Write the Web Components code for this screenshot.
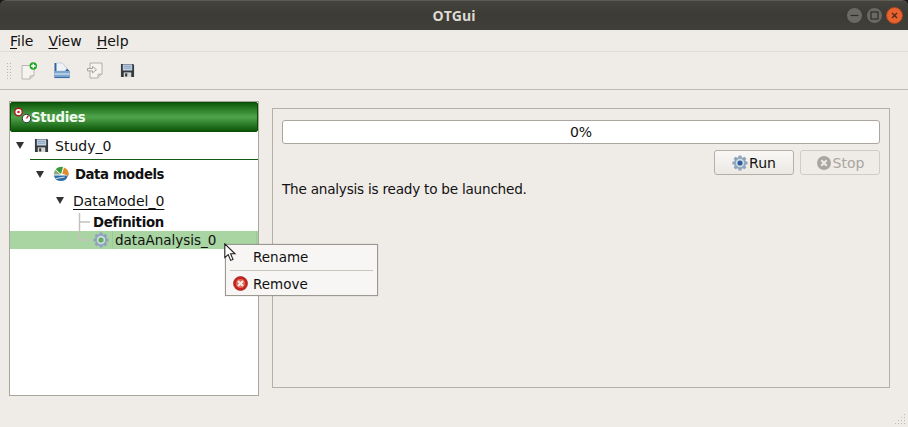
<!DOCTYPE html>
<html>
<head>
<meta charset="utf-8">
<title>OTGui</title>
<style>
	html, body {
		margin: 0;
		padding: 0;
		background: #efebe7;
	}
	body {
		font: 14px "DejaVu Sans", sans-serif;
		color: #111;
	}
</style>
</head>
<body>

<ot-window>
	<ot-titlebar slot="title">OTGui</ot-titlebar>
	<ot-menubar slot="menu"></ot-menubar>
	<ot-toolbar slot="tools"></ot-toolbar>
	<ot-study-tree slot="left"></ot-study-tree>
	<ot-analysis-panel slot="right"></ot-analysis-panel>
	<ot-context-menu slot="overlay"></ot-context-menu>
</ot-window>

<script>
// Shared icon markup, reused by several components
const ICONS = {
	floppy: ( s ) => `<svg width="${ s }" height="${ s }" viewBox="0 0 16 16">
		<path d="M1 1h13l1 1v13H1z" fill="#343a40"/>
		<rect x="3" y="1.5" width="10" height="6.5" fill="#c4d2e2"/>
		<path d="M4 3.5h8M4 5.5h8" stroke="#7f9dbd" stroke-width="1"/>
		<rect x="4" y="10" width="8" height="5" fill="#d6d6d2"/>
		<rect x="5.5" y="11" width="2.2" height="3.4" fill="#33373c"/>
	</svg>`,
	gear: ( s, core ) => `<svg width="${ s }" height="${ s }" viewBox="0 0 16 16">
		<g fill="#8ea4bb">
			<circle cx="8" cy="8" r="6"/>
			<rect x="6.4" y="0.4" width="3.2" height="15.2" rx=".6"/>
			<rect x="6.4" y="0.4" width="3.2" height="15.2" rx=".6" transform="rotate(45 8 8)"/>
			<rect x="6.4" y="0.4" width="3.2" height="15.2" rx=".6" transform="rotate(90 8 8)"/>
			<rect x="6.4" y="0.4" width="3.2" height="15.2" rx=".6" transform="rotate(135 8 8)"/>
		</g>
		<circle cx="8" cy="8" r="4.2" fill="#d3dde6"/>
		<circle cx="8" cy="8" r="2.6" fill="${ core }"/>
	</svg>`,
};

class OtWindow extends HTMLElement {
	constructor() {
		super();
		this.attachShadow( { mode: 'open' } ).innerHTML = `
<style>
	:host {
		display: flex;
		flex-direction: column;
		position: relative;
		width: 908px;
		height: 427px;
		overflow: hidden;
		background: #efebe7;
	}
	#main {
		display: flex;
		align-items: flex-start;
		gap: 13px;
		padding: 11px 18px 0 9px;
	}
	#grip {
		position: absolute;
		right: 2px;
		bottom: 2px;
		width: 11px;
		height: 11px;
	}
</style>
<slot name="title"></slot>
<slot name="menu"></slot>
<slot name="tools"></slot>
<div id="main">
	<slot name="left"></slot>
	<slot name="right"></slot>
</div>
<slot name="overlay"></slot>
<svg id="grip" viewBox="0 0 11 11" fill="#bdb9b2">
	<rect x="9" y="0" width="1" height="1"/>
	<rect x="6" y="3" width="1" height="1"/><rect x="9" y="3" width="1" height="1"/>
	<rect x="3" y="6" width="1" height="1"/><rect x="6" y="6" width="1" height="1"/><rect x="9" y="6" width="1" height="1"/>
	<rect x="0" y="9" width="1" height="1"/><rect x="3" y="9" width="1" height="1"/><rect x="6" y="9" width="1" height="1"/><rect x="9" y="9" width="1" height="1"/>
</svg>`;
	}
}
customElements.define( 'ot-window', OtWindow );

class OtTitlebar extends HTMLElement {
	constructor() {
		super();
		this.attachShadow( { mode: 'open' } ).innerHTML = `
<style>
	:host {
		display: block;
		height: 30px;
		background: #1c1b19;
	}
	#bar {
		position: relative;
		display: flex;
		align-items: center;
		justify-content: center;
		height: 30px;
		box-sizing: border-box;
		border-radius: 6px 6px 0 0;
		border-top: 1px solid #5d5b54;
		background: linear-gradient(#45433e, #3d3b36 45%, #413f3a);
		color: #dfdbd2;
		font: bold 14px "Open Sans", sans-serif;
	}
	#btns {
		position: absolute;
		right: 5px;
		top: 6px;
		display: flex;
		gap: 3px;
	}
	.b {
		width: 17px;
		height: 17px;
		display: block;
	}
</style>
<div id="bar">
	<slot></slot>
	<div id="btns">
		<svg class="b" viewBox="0 0 17 17"><circle cx="8.5" cy="8.5" r="8" fill="#6a6964" stroke="#3a3934"/><path d="M4.5 8.5h8" stroke="#2f2e2a" stroke-width="1.2"/></svg>
		<svg class="b" viewBox="0 0 17 17"><circle cx="8.5" cy="8.5" r="8" fill="#6a6964" stroke="#3a3934"/><rect x="5" y="5" width="7" height="7" fill="none" stroke="#2f2e2a" stroke-width="1.2"/></svg>
		<svg class="b" viewBox="0 0 17 17"><circle cx="8.5" cy="8.5" r="8" fill="#e9622f" stroke="#a8451f"/><path d="M6 6l5 5M11 6l-5 5" stroke="#4a2a18" stroke-width="1.2"/></svg>
	</div>
</div>`;
	}
}
customElements.define( 'ot-titlebar', OtTitlebar );

class OtMenubar extends HTMLElement {
	constructor() {
		super();
		this.attachShadow( { mode: 'open' } ).innerHTML = `
<style>
	:host {
		display: flex;
		gap: 15px;
		height: 22px;
		box-sizing: border-box;
		padding: 2px 0 0 10px;
		border-bottom: 1px solid #dfdbd6;
		font: 14px/18px "DejaVu Sans", sans-serif;
		color: #111;
	}
	u {
		text-decoration-thickness: 1px;
		text-underline-offset: 2px;
	}
</style>
<span><u>F</u>ile</span>
<span><u>V</u>iew</span>
<span><u>H</u>elp</span>`;
	}
}
customElements.define( 'ot-menubar', OtMenubar );

class OtToolbar extends HTMLElement {
	constructor() {
		super();
		this.attachShadow( { mode: 'open' } ).innerHTML = `
<style>
	:host {
		display: flex;
		align-items: center;
		height: 38px;
		box-sizing: border-box;
		padding-left: 6px;
		border-bottom: 1px solid #bdb9b3;
		background: #efebe7;
	}
	#handle {
		width: 6px;
		height: 18px;
		margin-right: 9px;
		background-image: radial-gradient(#b9b5ae 0.7px, transparent 0.8px);
		background-size: 3px 3px;
	}
	#icons {
		display: flex;
		gap: 17px;
	}
	svg {
		display: block;
	}
</style>
<div id="handle"></div>
<div id="icons">
	<svg width="16" height="18" viewBox="0 0 16 18">
		<path d="M1 3.5h12v10l-4 3.5H1z" fill="#f4f3f0" stroke="#b9b7b1"/>
		<path d="M13 13.5l-4 .5v3" fill="#dcdad5" stroke="#b9b7b1"/>
		<circle cx="12.3" cy="4" r="3.7" fill="#1ea51e"/>
		<path d="M10 4h4.6M12.3 1.8v4.4" stroke="#fff" stroke-width="1.4"/>
	</svg>
	<svg width="16" height="17" viewBox="0 0 16 17">
		<path d="M.5 1h7l8 8v6.5H.5z" fill="#2f63a0"/>
		<path d="M2.5 1h6l4.5 5.5-2 2.5H2.5z" fill="#eef2f6" stroke="#9fb4c9" stroke-width=".5"/>
		<path d="M.5 9h15v7H.5z" fill="#7ea6cf"/>
		<path d="M.5 12h15" stroke="#c9dcee" stroke-width="1.4"/>
		<path d="M.5 15.5h15" stroke="#3d6ea5" stroke-width="1.2"/>
	</svg>
	<svg width="16" height="17" viewBox="0 0 16 17">
		<path d="M3 1h12v11l-4 4H3z" fill="#f4f3f0" stroke="#b0aea8"/>
		<path d="M15 12l-4 .4V16" fill="#dcdad5" stroke="#b0aea8"/>
		<path d="M0.5 6.5h5v-2l4 3.2-4 3.2v-2h-5z" fill="#f4f3f0" stroke="#a5a39d"/>
	</svg>
	<svg width="15" height="15" viewBox="0 0 16 16" style="margin-top:1px">
		<path d="M1 1h13l1 1v13H1z" fill="#343a40"/>
		<rect x="3" y="1.5" width="10" height="6.5" fill="#c4d2e2"/>
		<path d="M4 3.5h8M4 5.5h8" stroke="#7f9dbd"/>
		<rect x="4" y="10" width="8" height="5" fill="#d6d6d2"/>
		<rect x="5.5" y="11" width="2.2" height="3.4" fill="#33373c"/>
	</svg>
</div>`;
	}
}
customElements.define( 'ot-toolbar', OtToolbar );

/* One line of the tree: indent, arrow or branch, icon and label */
class OtTreeRow extends HTMLElement {
	constructor() {
		super();
		this.attachShadow( { mode: 'open' } ).innerHTML = `
<style>
	:host {
		display: flex;
		align-items: center;
		position: relative;
		height: var(--row-h, 18px);
		padding-left: var(--indent, 0);
		color: #111;
	}
	:host([selected]) {
		background: #a8d5a2;
	}
	#arrow {
		width: 0;
		height: 0;
		margin: 0 10px 0 2px;
		border-style: solid;
		border-width: 7px 4px 0 4px;
		border-color: #333 transparent transparent transparent;
	}
	:host(:not([arrow])) #arrow {
		display: none;
	}
	#icon {
		display: flex;
		margin-left: var(--icon-shift, 0);
		margin-right: var(--icon-gap, 5px);
	}
</style>
<div id="arrow"></div>
<div id="icon"><slot name="icon"></slot></div>
<slot></slot>`;
	}
}
customElements.define( 'ot-tree-row', OtTreeRow );

class OtStudyTree extends HTMLElement {
	constructor() {
		super();
		this.attachShadow( { mode: 'open' } ).innerHTML = `
<style>
	:host {
		display: flex;
		flex-direction: column;
		flex: none;
		position: relative;
		width: 250px;
		height: 295px;
		box-sizing: border-box;
		border: 1px solid #a9a69f;
		background: #fff;
		font: 14px "DejaVu Sans", sans-serif;
	}
	#head {
		display: flex;
		align-items: center;
		height: 30px;
		box-sizing: border-box;
		padding-left: 2px;
		border-radius: 2px;
		background: linear-gradient(#0e5a0a, #4fa54b 50%, #0c5508);
		border: 1px solid #0b4d07;
		color: #f2faf0;
		font-size: 13.3px;
		letter-spacing: -.3px;
		font-weight: bold;
	}
	#head svg {
		margin-top: -4px;
	}
	#sep {
		height: 1px;
		margin-left: 20px;
		background: #155a12;
	}
	#branch {
		position: absolute;
		left: 68px;
		top: 111px;
	}
	svg {
		display: block;
	}
	#study {
		--row-h: 27px;
		--indent: 4px;
		--icon-gap: 6px;
	}
	#models {
		--row-h: 28px;
		--indent: 24px;
		--icon-gap: 6px;
		--icon-shift: -1px;
		font-size: 13.3px;
		letter-spacing: -.45px;
		font-weight: bold;
	}
	#model {
		--row-h: 25px;
		--indent: 44px;
		--icon-gap: 0;
		--icon-shift: -1px;
	}
	#model u {
		text-decoration-thickness: 1px;
		text-underline-offset: 3px;
	}
	#def {
		--row-h: 18px;
		--indent: 83px;
		--icon-gap: 0;
		font-size: 13.3px;
		letter-spacing: -.3px;
		font-weight: bold;
	}
	#analysis {
		--row-h: 18px;
		--indent: 83px;
		--icon-gap: 3px;
		font-size: 13.5px;
	}
	#label {
		flex: 1;
		display: block;
		height: 18px;
		line-height: 18px;
		box-sizing: border-box;
		padding-left: 2px;
		margin-right: 1px;
		border: 1px solid #9dcb97;
		border-width: 0 1px;
	}
</style>
<div id="head">
	<svg width="18" height="17" viewBox="0 0 18 17">
		<circle cx="5.5" cy="5" r="3.8" fill="#fff" stroke="#a81c1c" stroke-width="1.4"/>
		<circle cx="5.5" cy="5" r="1.3" fill="#c22"/>
		<circle cx="13.5" cy="11.5" r="4.2" fill="#fff" stroke="#333" stroke-width="1"/>
		<path d="M13.5 11.5l2-3.2" stroke="#b22" stroke-width="1.4"/>
	</svg>
	<span>Studies</span>
</div>
<ot-tree-row id="study" arrow><span slot="icon">${ ICONS.floppy( 15 ) }</span>Study_0</ot-tree-row>
<div id="sep"></div>
<ot-tree-row id="models" arrow>
	<svg slot="icon" width="16" height="16" viewBox="0 0 16 16">
		<path d="M8 8L2.6 3.2A7.2 7.2 0 0 1 10 1z" fill="#3a9a3a"/>
		<path d="M9.2 7.8L11 1.4A7.2 7.2 0 0 1 15.6 9.8z" fill="#e28a2e"/>
		<path d="M7.6 8.6L2.2 4A7.2 7.2 0 0 0 .9 8.6z" fill="#8aa67a"/>
		<path d="M.9 9.6h14a7.2 7.2 0 0 1-14 0z" fill="#2f6ca3"/>
		<path d="M2.6 12.6l9-1.6" stroke="#cfe0ee"/>
	</svg>
	Data models
</ot-tree-row>
<ot-tree-row id="model" arrow><u>DataModel_0</u></ot-tree-row>
<ot-tree-row id="def">Definition</ot-tree-row>
<ot-tree-row id="analysis" selected>
	<span slot="icon">${ ICONS.gear( 16, '#5fae5a' ) }</span>
	<span id="label">dataAnalysis_0</span>
</ot-tree-row>
<svg id="branch" width="18" height="34" viewBox="0 0 18 34" fill="none" stroke="#c4c1ba" stroke-width="1.5">
	<path d="M1.5 0V27H14M1.5 9H12"/>
</svg>`;
	}
}
customElements.define( 'ot-study-tree', OtStudyTree );

class OtButton extends HTMLElement {
	constructor() {
		super();
		this.attachShadow( { mode: 'open' } ).innerHTML = `
<style>
	:host {
		display: flex;
		align-items: center;
		justify-content: center;
		gap: 1px;
		width: 80px;
		height: 25px;
		box-sizing: border-box;
		border: 1px solid #b4b0a9;
		border-radius: 3px;
		background: linear-gradient(#f9f8f6, #ebe8e3);
		color: #111;
	}
	:host([disabled]) {
		border-color: #cfcbc5;
		background: #efebe7;
		color: #a9a6a0;
	}
	::slotted(svg) {
		display: block;
	}
</style>
<slot name="icon"></slot><slot></slot>`;
	}
}
customElements.define( 'ot-button', OtButton );

class OtAnalysisPanel extends HTMLElement {
	constructor() {
		super();
		const shadow = this.attachShadow( { mode: 'open' } );
		shadow.innerHTML = `
<style>
	:host {
		display: flex;
		flex-direction: column;
		flex: none;
		width: 618px;
		height: 280px;
		box-sizing: border-box;
		margin-top: 7px;
		padding: 11px 9px 0;
		border: 1px solid #b4b0a9;
		font: 14px "DejaVu Sans", sans-serif;
		color: #111;
	}
	#progress {
		display: flex;
		align-items: center;
		justify-content: center;
		height: 24px;
		box-sizing: border-box;
		border: 1px solid #aaa69f;
		border-radius: 3px;
		background: #fff;
	}
	#actions {
		display: flex;
		justify-content: flex-end;
		gap: 6px;
		margin-top: 6px;
	}
	#msg {
		margin-top: 6px;
		line-height: 17px;
		font-size: 13.6px;
		letter-spacing: -.23px;
	}
	svg {
		display: block;
	}
</style>
<div id="progress">0%</div>
<div id="actions">
	<ot-button>
		<span slot="icon">${ ICONS.gear( 16, '#2f5f9f' ) }</span>
		Run
	</ot-button>
	<ot-button disabled>
		<svg slot="icon" width="16" height="16" viewBox="0 0 16 16">
			<circle cx="8" cy="8" r="7" fill="#a9a6a0"/>
			<path d="M5.3 5.3l5.4 5.4M10.7 5.3l-5.4 5.4" stroke="#efebe7" stroke-width="2"/>
		</svg>
		Stop
	</ot-button>
</div>
<div id="msg">The analysis is ready to be launched.</div>`;
	}
}
customElements.define( 'ot-analysis-panel', OtAnalysisPanel );

class OtContextMenu extends HTMLElement {
	constructor() {
		super();
		this.attachShadow( { mode: 'open' } ).innerHTML = `
<style>
	:host {
		position: absolute;
		left: 225px;
		top: 244px;
		display: block;
		width: 153px;
		height: 52px;
		box-sizing: border-box;
		border: 1px solid #9b9892;
		box-shadow: 0 0 1px rgba(0, 0, 0, .25);
		background: #f7f6f4;
		font: 13.5px "DejaVu Sans", sans-serif;
		color: #111;
	}
	.item {
		display: flex;
		align-items: center;
		height: 24px;
		padding-left: 27px;
		position: relative;
	}
	#sep {
		height: 1px;
		margin: 1px 4px 1px 4px;
		background: #c9c6c0;
	}
	.item svg {
		position: absolute;
		left: 7px;
		top: 4px;
	}
	#cursor {
		position: absolute;
		left: -2px;
		top: -2px;
	}
</style>
<div class="item">Rename</div>
<div id="sep"></div>
<div class="item">
	<svg width="15" height="15" viewBox="0 0 15 15">
		<circle cx="7.5" cy="7.5" r="7" fill="#c9231f" stroke="#8e1512" stroke-width=".6"/>
		<circle cx="7.5" cy="7.5" r="4.6" fill="#e0685a"/>
		<path d="M5 5l5 5M10 5l-5 5" stroke="#f6ebe2" stroke-width="2.2"/>
	</svg>
	Remove
</div>
<svg id="cursor" width="14" height="19" viewBox="0 0 14 19">
	<path d="M.8.8V14.6L4.2 11.6 6.6 17.4 9 16.4 6.6 10.8H11z" fill="#fff" stroke="#222" stroke-width="1.1"/>
</svg>`;
	}
}
customElements.define( 'ot-context-menu', OtContextMenu );
</script>
</body>
</html>
